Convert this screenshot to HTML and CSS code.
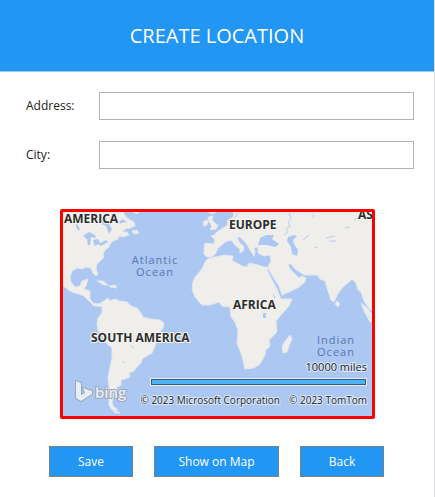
FILE: index.html
```html
<!DOCTYPE html>
<html lang="en">
<head>
<meta charset="utf-8">
<meta name="viewport" content="width=device-width, initial-scale=1">
<title>Create Location</title>
<link rel="stylesheet" href="styles.css">
</head>
<body>
<main class="page">
  <header class="header"><h1 class="title">CREATE LOCATION</h1></header>
  <form class="form">
    <div class="fields">
      <label for="address">Address:</label>
      <input class="field" id="address" type="text">
      <label for="city">City:</label>
      <input class="field" id="city" type="text">
    </div>
    <div class="map">
      <svg class="map-art" viewBox="63 212 309 204" role="img" aria-label="World map">
        <rect class="water" x="63" y="212" width="309" height="204"/>
        <g class="land">
          <path d="M63 212H123L126 217L130 220L134 222L135 226L130 228L125 229L122 232L127 232L129 235L123 237L119 236L118 239L113 241L110 244L109 247L105 250L103 254L104 257L100 261L97 264L96 269L98 274L96 276L93 273L91 268L86 267L82 269L77 268L72 271L70 277L71 282L75 287L80 286L82 281L88 279L86 286L84 289L90 291L90 299L93 303L99 304L104 301L108 298L110 301L115 299L120 301L127 302L131 306L137 308L141 313L143 317L151 319L160 320L164 323L163 328L158 334L157 339L155 346L152 353L147 356L142 359L141 363L136 368L133 372L129 372L130 377L125 379L121 380L121 385L116 388L118 392L114 395L112 402L113 406L118 410L112 410L109 405L109 398L107 393L109 386L108 378L110 367L112 358L112 348L107 344L103 337L98 330L97 324L98 318L102 313L102 307L98 306L94 306L89 301L84 296L79 294L75 293L70 291L66 288L63 286Z"/>
          <path d="M233 212L234 216L230 219L227 221L228 225L223 228L218 231L214 235L211 236L215 240L214 244L205 243L204 249L204 254L207 257L212 257L216 253L218 248L222 245L225 242L231 240L235 245L240 249L240 253L243 251L244 247L239 242L237 237L240 237L246 243L250 250L254 256L255 252L254 248L258 247L258 253L264 256L270 255L271 261L268 267L264 267L258 265L249 263L247 267L242 266L237 263L232 261L233 256L225 255L215 257L208 259L205 262L202 269L195 277L193 282L192 289L195 297L202 305L210 305L219 302L222 306L230 307L231 317L235 322L238 330L237 343L242 356L245 369L254 368L260 364L265 355L266 350L270 346L269 340L277 332L276 321L281 315L289 306L292 299L281 299L277 289L271 278L267 270L268 268L273 277L279 286L282 295L291 291L299 287L305 282L306 278L302 276L299 278L295 274L290 269L288 264L291 264L295 269L301 273L304 275L317 275L320 279L325 281L327 288L331 300L334 302L337 295L343 287L349 282L352 279L356 283L358 290L361 292L364 301L370 310L372 309V212Z"/>
          <path d="M208 217L213 216L212 220L216 224L218 225L216 229L210 230L212 226L209 222ZM204 221L208 220L207 225L203 226ZM208 212H216L213 214ZM133 212H139L137 214ZM132 231L137 230L139 233L134 234ZM97 281L103 281L108 285L104 285ZM109 286L115 285L117 288L110 287ZM290 335L292 339L289 346L287 352L283 353L282 346L286 340ZM337 301L340 304L338 307L335 304ZM361 303L366 307L372 314V320L365 313ZM364 311L369 315L372 321L370 322ZM113 410L120 413L115 413Z"/>
        </g>
        <g class="lake">
          <path d="M83 236L89 232L95 235L96 238L91 237L90 245L88 245L87 239ZM93 240L98 239L100 243L95 246L94 243ZM98 244L106 240L108 242L101 246ZM97 219L106 218L109 224L112 229L109 234L106 226L99 223ZM76 223L80 229L79 231L76 227ZM118 224L122 219L127 222L122 223ZM258 245L260 238L266 235L274 235L272 239L279 244L275 247L267 245ZM288 237L294 235L297 236L293 240L294 244L298 250L297 256L292 254L291 247L287 241ZM273 294L276 297L274 298ZM263 313L266 313L266 318L263 318Z"/>
          <path class="rivers" d="M289 213L291 218L288 222L290 226L286 229L288 232L284 235M303 240L309 235M315 247L318 248M326 238L335 236M329 241L336 241M312 215L314 218M354 220L359 217M345 228L350 227M241 230L245 229M235 218L238 213M122 361L125 363M131 346L134 348"/>
        </g>
        <g class="continent">
          <text x="64" y="223">AMERICA</text>
          <text x="229" y="229">EUROPE</text>
          <text x="358" y="219">AS</text>
          <text x="233" y="309">AFRICA</text>
          <text x="91" y="342">SOUTH AMERICA</text>
        </g>
        <g class="ocean">
          <text x="155" y="264">Atlantic</text>
          <text x="155" y="276">Ocean</text>
          <text x="336" y="344">Indian</text>
          <text x="336" y="356">Ocean</text>
        </g>
        <g class="bing">
          <path d="M76 381L81 383V395L85 393L83 388L92 391V394L81 401L76 398Z"/>
          <text x="95" y="398">bing</text>
        </g>
        <rect class="scale-halo" x="150" y="378" width="217" height="8"/>
        <rect class="scale-edge" x="151" y="379" width="215" height="6"/>
        <rect class="scale-fill" x="152" y="380" width="213" height="4"/>
        <text class="miles" x="367" y="371">10000 miles</text>
        <text class="credit" x="280" y="404">© 2023 Microsoft Corporation</text>
        <text class="credit" x="367" y="404">© 2023 TomTom</text>
      </svg>
    </div>
    <div class="actions">
      <button class="button" type="button">Save</button>
      <button class="button button-wide" type="button">Show on Map</button>
      <button class="button" type="button">Back</button>
    </div>
  </form>
</main>
</body>
</html>
```
FILE: styles.css
```css
* {
  box-sizing: border-box;
}

body {
  margin: 0;
  background: #fff;
  color: #222;
  font: 12px/16px "Open Sans", "Noto Sans", sans-serif;
}

.page {
  min-height: 100vh;
  border-right: 1px solid #dcdcdf;
}

.header {
  padding: 20px;
  border-bottom: 1px solid #90cbfa;
  background: #2196f3;
}

.title {
  margin: 0;
  color: #fff;
  font-size: 20px;
  font-weight: 400;
  line-height: 31px;
  text-align: center;
}

.fields {
  display: grid;
  grid-template-columns: 73px 1fr;
  row-gap: 21px;
  align-items: center;
  padding: 20px 20px 0 26px;
}

.field {
  width: 100%;
  height: 28px;
  padding: 4px 6px;
  border: 1px solid #b1b3b9;
  border-radius: 0;
  background: #fff;
  font: inherit;
}

.map {
  margin: 40px 59px 0 60px;
  border: 3px solid #f00;
  border-radius: 2px;
}

.map-art {
  display: block;
  width: 100%;
  height: auto;
}

.water {
  fill: #abc7f2;
}

.land {
  fill: #efeeea;
  stroke: #e3e7ec;
  stroke-width: 1px;
  stroke-linejoin: round;
}

.lake {
  fill: #abc7f2;
}

.rivers {
  fill: none;
  stroke: #b9cdec;
  stroke-width: 1px;
}

.continent {
  fill: #2d2d2d;
  stroke: #f5f5f3;
  stroke-width: 2px;
  paint-order: stroke;
  font-size: 12px;
  font-weight: 700;
}

.ocean {
  fill: #5874b5;
  font-size: 11px;
  letter-spacing: 1px;
  text-anchor: middle;
}

.bing {
  fill: #e9eef6;
  stroke: #9aa5b8;
  stroke-width: 2px;
  stroke-linejoin: round;
  paint-order: stroke;
  font-size: 15px;
  font-weight: 600;
}

.scale-halo {
  fill: #e6eefb;
}

.scale-edge {
  fill: #3e5a70;
}

.scale-fill {
  fill: #4db4fa;
}

.miles,
.credit {
  fill: #1c1c1c;
  stroke: #dce7fa;
  stroke-width: 2px;
  paint-order: stroke;
  text-anchor: end;
}

.miles {
  font-size: 11px;
}

.credit {
  font-size: 10px;
}

.actions {
  display: flex;
  justify-content: center;
  gap: 21px;
  padding: 27px 1px 20px 0;
}

.button {
  width: 84px;
  height: 31px;
  padding: 0;
  border: 1px solid #7b8087;
  border-radius: 0;
  background: #2196f3;
  color: #fff;
  font: inherit;
}

.button-wide {
  width: 125px;
}
```
